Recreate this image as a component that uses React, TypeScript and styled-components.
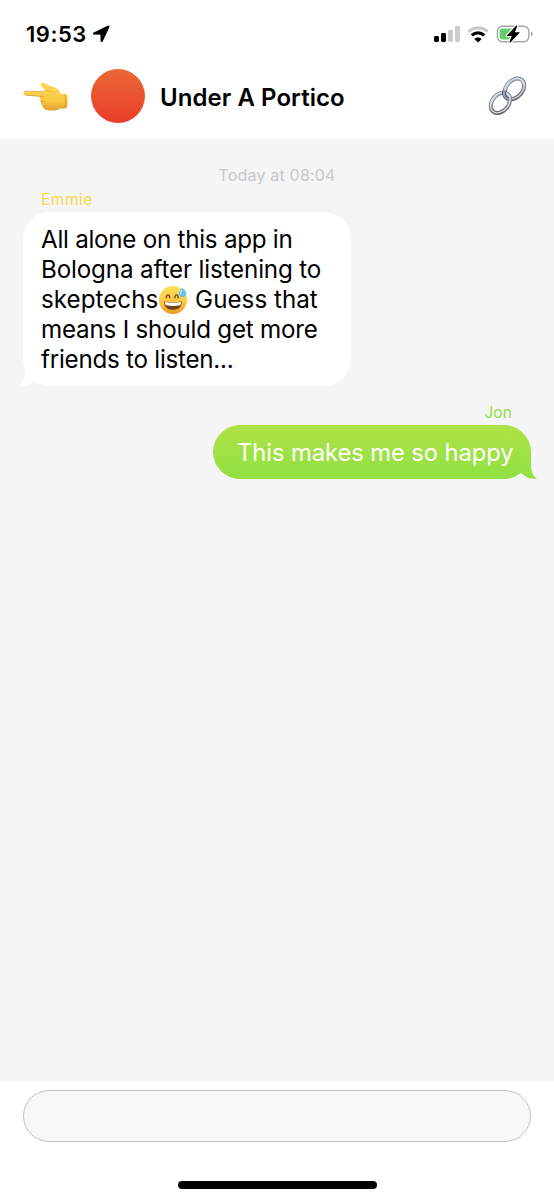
import React from "react";
import styled, { createGlobalStyle } from "styled-components";

const GlobalStyle = createGlobalStyle`
  * { box-sizing: border-box; }
  body { margin: 0; background: #fff; font-family: Inter, "Liberation Sans", sans-serif; color: #000; }
  svg { display: block; flex: none; }
`;

const Screen = styled.main`
  display: flex;
  flex-direction: column;
  width: 554px;
  height: 1200px;
  overflow: hidden;
  background: #fff;
`;

const StatusBar = styled.div`
  display: flex;
  align-items: center;
  height: 68px;
  padding: 0 21px 0 26px;
`;

const Clock = styled.span`
  width: 66px;
  font-size: 22px;
  font-weight: 600;
  letter-spacing: 0.5px;
  line-height: 26px;
`;

const StatusIcons = styled.div`
  display: flex;
  align-items: center;
  margin-left: auto;
  gap: 7px;
`;

const Header = styled.header`
  display: flex;
  align-items: center;
  height: 71px;
  padding: 0 27px 15px 22px;
`;

const Avatar = styled.div`
  width: 54px;
  height: 54px;
  margin-left: 22px;
  border-radius: 50%;
  background: linear-gradient(#eb6834, #ea3e2b);
`;

const Title = styled.h1`
  margin: 3px auto 0 15px;
  font-size: 24px;
  font-weight: 600;
  line-height: 30px;
  letter-spacing: 0.06px;
  white-space: nowrap;
`;

const Thread = styled.section`
  display: flex;
  flex-direction: column;
  height: 942px;
  padding: 26px 23px 0;
  background: #f5f5f5;
`;

const Timestamp = styled.time`
  align-self: center;
  height: 24px;
  font-size: 16px;
  line-height: 21px;
  letter-spacing: 0.2px;
  color: #c7c7cc;
`;

const Sender = styled.div<{ $mine?: boolean }>`
  align-self: ${(p) => (p.$mine ? "flex-end" : "flex-start")};
  height: ${(p) => (p.$mine ? 24 : 23)}px;
  padding: ${(p) => (p.$mine ? "1px 19px 0 0" : "0 0 0 18px")};
  font-size: 15.5px;
  line-height: 22px;
  letter-spacing: ${(p) => (p.$mine ? 0.1 : 0.5)}px;
  color: ${(p) => (p.$mine ? "#96dc48" : "#f5d94e")};
`;

const Bubble = styled.div<{ $mine?: boolean }>`
  position: relative;
  align-self: ${(p) => (p.$mine ? "flex-end" : "flex-start")};
  width: ${(p) => (p.$mine ? 318 : 328)}px;
  height: ${(p) => (p.$mine ? 54 : 174)}px;
  margin-bottom: 15px;
  padding: ${(p) => (p.$mine ? "13px 0 0 24px" : "13px 0 0 18px")};
  border-radius: 27px;
  color: ${(p) => (p.$mine ? "#fff" : "#000")};
  background: ${(p) => (p.$mine ? "linear-gradient(#aee246, #91e143)" : "#fff")};
`;

const Tail = styled.svg<{ $mine?: boolean }>`
  position: absolute;
  bottom: 0;
  ${(p) => (p.$mine ? "right: -6px;" : "left: -4px; transform: scaleX(-1);")}
`;

const Line = styled.div<{ $spacing: number; $light?: boolean }>`
  position: relative;
  display: flex;
  align-items: center;
  height: 30px;
  font-size: ${(p) => (p.$light ? 23.8 : 24.2)}px;
  line-height: 30px;
  letter-spacing: ${(p) => p.$spacing}px;
  white-space: pre;
`;

const Composer = styled.footer`
  display: flex;
  flex-direction: column;
  align-items: center;
  height: 119px;
  padding: 9px 23px 0;
`;

const MessageField = styled.div`
  width: 508px;
  height: 52px;
  border: 1.5px solid #c0c0c0;
  border-radius: 26px;
  background: #f8f8f8;
`;

const HomeIndicator = styled.div`
  width: 199px;
  height: 8px;
  margin-top: 39px;
  border-radius: 4px;
  background: #000;
`;

const LocationArrow = () => (
  <svg width="18" height="18" viewBox="0 0 18 18">
    <path
      d="M1.6 8.4 16 1.3c.6-.3 1 .1.7.7L10.2 15.8c-.3.6-.9.5-.9-.2l-.1-5.9c0-.6-.2-.8-.8-.8l-6.6-.1Z"
      stroke="#000"
      strokeWidth="1.5"
      strokeLinejoin="round"
    />
  </svg>
);

const Signal = () => (
  <svg width="26" height="16" viewBox="0 0 26 16">
    <rect x="0" y="10" width="5" height="6" rx="1.4" />
    <rect x="7" y="7" width="5" height="9" rx="1.4" />
    <rect x="14" y="4" width="5" height="12" rx="1.4" fill="#cccccd" />
    <rect x="21" y="0" width="5" height="16" rx="1.4" fill="#cccccd" />
  </svg>
);

const Wifi = () => (
  <svg width="22" height="17" viewBox="0 0 22 17">
    <path d="M1.4 5.6C7 .6 15 .6 20.6 5.6" fill="none" stroke="#cbcbcd" strokeWidth="3.2" />
    <path d="M4.8 9.4c3.5-3.3 8.9-3.3 12.4 0" fill="none" stroke="#000" strokeWidth="3.2" />
    <path d="M7.4 12.9c2.1-1.9 5.1-1.9 7.2 0L11 16.6Z" />
  </svg>
);

const Battery = () => (
  <svg width="37" height="18" viewBox="0 0 37 18">
    <rect x="1.4" y="1.2" width="31.4" height="15.6" rx="5" fill="#fff" stroke="#a5a5a7" strokeWidth="1.4" />
    <rect x="3.6" y="3.4" width="13.6" height="11.2" rx="3" fill="#63cd69" />
    <path d="M34.8 6.6c2.4.8 2.4 4 0 4.8Z" fill="#a5a5a7" />
    <path d="m20.1.8-9 9.4c-.4.5-.2.9.4.9h4.2l-2.1 5.5c-.3.9.4 1.2 1 .6l8.8-9.1c.5-.5.2-.9-.4-.9h-4.1l2.2-5.8c.3-.9-.4-1.2-1-.6Z" stroke="#fff" strokeWidth="2.2" paintOrder="stroke" />
  </svg>
);

const PointingHand = () => (
  <svg width="47" height="34" viewBox="0 0 47 34">
    <defs>
      <linearGradient id="hand" x2="0" y2="1">
        <stop stopColor="#ffd65a" />
        <stop offset=".65" stopColor="#fbc842" />
        <stop offset="1" stopColor="#e0a02b" />
      </linearGradient>
    </defs>
    <path d="M3 12.2c-2.1.1-2.2 3.5.1 3.8l14.8 1.3c-.3 2.1 0 3.9.9 5.2-.1 2.2.6 3.6 2.1 4.4.4 2.3 1.6 3.5 3.6 4 4 1.1 9.8 1.2 14-1.5l5.9.1c1.5-3.4 1.8-9.5.4-14.2l-6-.4c-1-3.2-3.3-5.6-6.6-6.6-4.4-1.3-7.5-2.4-9.7-4-2.1-1.5-4.7.5-3.2 2.9 1.1 1.8 3.3 3.2 5.6 4.3-2.4.5-4.8.9-7.1 1Z" fill="url(#hand)" />
    <path d="M3 12.2 17.8 12.5c2.4-.1 4.7-.5 7.1-1 1.3.6 2.7 1 4 1.3" fill="none" stroke="#dda632" strokeWidth=".7" strokeLinecap="round" />
    <path d="M3.3 16 17.9 17.3c1.7-.1 3 0 4.2.5M18.8 22.5c1.4-.4 2.6-.3 3.7.2M20.9 27c1.3-.4 2.5-.3 3.5 0" fill="none" stroke="#d3942a" strokeWidth=".8" strokeLinecap="round" />
    <path d="M43 15.5c1.2 4.5 1 9.3-.3 13.2" fill="none" stroke="#c98d2b" strokeWidth=".7" />
  </svg>
);

const ChainLinks = () => (
  <svg width="40" height="40" viewBox="0 0 40 40">
    <defs>
      <linearGradient id="steel" x2="1" y2="1">
        <stop stopColor="#8e98ab" />
        <stop offset=".35" stopColor="#c3cad6" />
        <stop offset=".6" stopColor="#8b91a0" />
        <stop offset="1" stopColor="#5a5559" />
      </linearGradient>
    </defs>
    <g fill="none">
      <g transform="rotate(40 27.5 12.8)">
        <ellipse cx="27.5" cy="12.8" rx="8.2" ry="11.4" stroke="#62636d" strokeWidth="4" />
        <ellipse cx="27.5" cy="12.8" rx="8.2" ry="11.4" stroke="url(#steel)" strokeWidth="3" />
        <ellipse cx="27.3" cy="12.7" rx="8.3" ry="11.5" stroke="#e1e7f1" strokeWidth="1" />
      </g>
      <g transform="rotate(40 13.4 26.8)">
        <ellipse cx="13.4" cy="26.8" rx="8.2" ry="11.4" stroke="#62636d" strokeWidth="4" />
        <ellipse cx="13.4" cy="26.8" rx="8.2" ry="11.4" stroke="url(#steel)" strokeWidth="3" />
        <ellipse cx="13.2" cy="26.7" rx="8.3" ry="11.5" stroke="#e8edf5" strokeWidth="1" />
      </g>
      <path d="M17 15.5c-.4 3.3 1.2 6.5 4.2 7.6" stroke="#55545e" strokeWidth="4" />
      <path d="M17 15.5c-.4 3.3 1.2 6.5 4.2 7.6" stroke="#959cac" strokeWidth="2" />
    </g>
  </svg>
);

const SweatSmile = () => (
  <svg width="30" height="30" viewBox="0 0 30 30">
    <defs>
      <linearGradient id="face" x2="0" y2="1">
        <stop stopColor="#ffe05a" />
        <stop offset=".6" stopColor="#fcc63d" />
        <stop offset="1" stopColor="#e59a24" />
      </linearGradient>
    </defs>
    <circle cx="15" cy="15" r="14" fill="url(#face)" />
    <path d="M8.3 12.7c.5-3.8 2.9-3.8 3.6 0M16.8 12.7c.6-3.8 2.9-3.8 3.5 0" fill="none" stroke="#704319" strokeWidth="1.4" strokeLinecap="round" />
    <path d="M6 16.4c5.8.9 12.2.9 18 0 0 5.3-3.8 8.4-9 8.4s-9-3.1-9-8.4Z" fill="#764018" />
    <path d="M6.8 17c5.3.8 11.1.8 16.4 0 0 1.8-.5 2.6-1.4 3.3-4.3.8-9.3.8-13.6 0-.9-.7-1.4-1.5-1.4-3.3Z" fill="#fff" />
    <path d="M24 2.8c-2.3 2.7-3.4 5-3.1 6.5.3 2 2 3.1 4.1 2.8 2.2-.3 3.4-2 3.1-4-.2-1.7-1.7-3.7-4.1-5.3Z" fill="#62bff0" />
    <path d="M24 5c-1 1.5-1.5 2.8-1.4 4" fill="none" stroke="#c8f0ff" strokeWidth="1.1" strokeLinecap="round" />
  </svg>
);

const BubbleTail = ({ mine }: { mine?: boolean }) => (
  <Tail $mine={mine} width="28" height="28" viewBox="0 0 28 28">
    <path d="M22 0v11c0 8 1.2 14 6 16.5-6 1.1-10.8-1.2-15.1-4.8L7 16V0Z" fill={mine ? "url(#tail)" : "#fff"} />
    <defs>
      <linearGradient id="tail" x2="0" y2="1">
        <stop stopColor="#a0e245" />
        <stop offset="1" stopColor="#91e143" />
      </linearGradient>
    </defs>
  </Tail>
);

export default function App() {
  return (
    <>
      <GlobalStyle />
      <Screen>
        <StatusBar>
          <Clock>19:53</Clock>
          <LocationArrow />
          <StatusIcons>
            <Signal />
            <Wifi />
            <Battery />
          </StatusIcons>
        </StatusBar>
        <Header>
          <PointingHand />
          <Avatar />
          <Title>Under A Portico</Title>
          <ChainLinks />
        </Header>
        <Thread>
          <Timestamp>Today at 08:04</Timestamp>
          <Sender>Emmie</Sender>
          <Bubble>
            <BubbleTail />
            <Line $spacing={-0.26}>All alone on this app in</Line>
            <Line $spacing={-0.15}>Bologna after listening to</Line>
            <Line $spacing={0.02}>skeptechs<SweatSmile /> Guess that</Line>
            <Line $spacing={-0.22}>means I should get more</Line>
            <Line $spacing={-0.25}>friends to listen...</Line>
          </Bubble>
          <Sender $mine>Jon</Sender>
          <Bubble $mine>
            <BubbleTail mine />
            <Line $light $spacing={-0.1}>This makes me so happy</Line>
          </Bubble>
        </Thread>
        <Composer>
          <MessageField />
          <HomeIndicator />
        </Composer>
      </Screen>
    </>
  );
}
